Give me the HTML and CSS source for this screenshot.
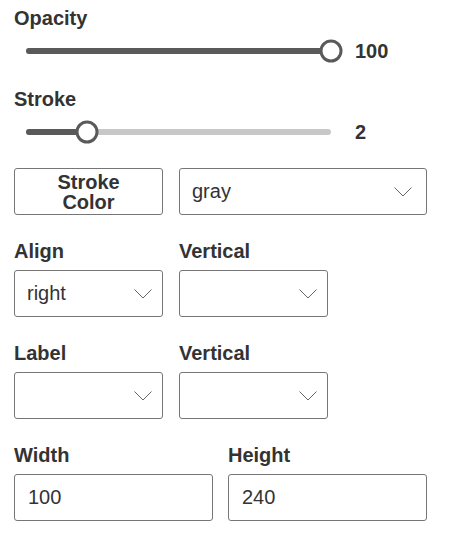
FILE: index.html
```html
<!DOCTYPE html>
<html>
<head>
<meta charset="utf-8">
<link rel="stylesheet" href="styles.css">
</head>
<body>
<div class="panel">
  <div class="group">
    <div class="label">Opacity</div>
    <div class="slider-row">
      <div class="track">
        <div class="fill" style="width:100%"></div>
        <div class="thumb" style="left:100%"></div>
      </div>
      <div class="value">100</div>
    </div>
  </div>

  <div class="group">
    <div class="label">Stroke</div>
    <div class="slider-row">
      <div class="track">
        <div class="fill" style="width:20%"></div>
        <div class="thumb" style="left:20%"></div>
      </div>
      <div class="value">2</div>
    </div>
  </div>

  <div class="color-row">
    <button class="btn">Stroke<br>Color</button>
    <div class="select select-wide">
      <span class="select-text">gray</span>
      <svg class="chev" width="18" height="10" viewBox="0 0 18 10"><polyline points="0.5,0.5 9,9 17.5,0.5" fill="none" stroke="#666" stroke-width="1"/></svg>
    </div>
  </div>

  <div class="pair-row">
    <div class="field">
      <div class="label">Align</div>
      <div class="select">
        <span class="select-text">right</span>
        <svg class="chev" width="18" height="10" viewBox="0 0 18 10"><polyline points="0.5,0.5 9,9 17.5,0.5" fill="none" stroke="#666" stroke-width="1"/></svg>
      </div>
    </div>
    <div class="field">
      <div class="label">Vertical</div>
      <div class="select">
        <span class="select-text"></span>
        <svg class="chev" width="18" height="10" viewBox="0 0 18 10"><polyline points="0.5,0.5 9,9 17.5,0.5" fill="none" stroke="#666" stroke-width="1"/></svg>
      </div>
    </div>
  </div>

  <div class="pair-row">
    <div class="field">
      <div class="label">Label</div>
      <div class="select">
        <span class="select-text"></span>
        <svg class="chev" width="18" height="10" viewBox="0 0 18 10"><polyline points="0.5,0.5 9,9 17.5,0.5" fill="none" stroke="#666" stroke-width="1"/></svg>
      </div>
    </div>
    <div class="field">
      <div class="label">Vertical</div>
      <div class="select">
        <span class="select-text"></span>
        <svg class="chev" width="18" height="10" viewBox="0 0 18 10"><polyline points="0.5,0.5 9,9 17.5,0.5" fill="none" stroke="#666" stroke-width="1"/></svg>
      </div>
    </div>
  </div>

  <div class="size-row">
    <div class="field">
      <div class="label">Width</div>
      <div class="input">100</div>
    </div>
    <div class="field">
      <div class="label">Height</div>
      <div class="input">240</div>
    </div>
  </div>
</div>
</body>
</html>
```

FILE: styles.css
```css
html, body {
  margin: 0;
  padding: 0;
  background: #fff;
}

body {
  font-family: "Liberation Sans", Arial, sans-serif;
  color: #333;
  font-size: 20px;
}

.panel {
  width: 413px;
  padding: 7px 0 0 14px;
}

.label {
  font-weight: bold;
  line-height: 23px;
  height: 23px;
  color: #333;
}

.group + .group {
  margin-top: 24px;
}

.slider-row {
  display: flex;
  align-items: center;
  height: 26px;
  margin-top: 8px;
  padding-left: 12px;
}

.track {
  position: relative;
  width: 305px;
  height: 6px;
  border-radius: 3px;
  background: #c8c8c8;
}

.fill {
  height: 100%;
  border-radius: 3px;
  background: #5a5a5a;
}

.thumb {
  position: absolute;
  top: 50%;
  width: 23px;
  height: 23px;
  box-sizing: border-box;
  border: 3px solid #5a5a5a;
  border-radius: 50%;
  background: #fff;
  transform: translate(-50%, -50%);
}

.value {
  margin-left: 24px;
  font-weight: bold;
  line-height: 23px;
}

.color-row {
  display: grid;
  grid-template-columns: 149px 1fr;
  column-gap: 16px;
  margin-top: 23px;
}

.btn {
  height: 47px;
  box-sizing: border-box;
  border: 1px solid #767676;
  border-radius: 3px;
  background: #fff;
  font-family: "Liberation Sans", Arial, sans-serif;
  font-size: 20px;
  font-weight: bold;
  line-height: 20px;
  color: #333;
  padding: 0;
  text-align: center;
}

.select {
  height: 47px;
  box-sizing: border-box;
  border: 1px solid #767676;
  border-radius: 3px;
  display: flex;
  align-items: center;
  justify-content: space-between;
  padding: 0 10px 0 12px;
}

.select-wide {
  padding-right: 14px;
}

.select-text {
  line-height: 23px;
  color: #333;
}

.chev {
  display: block;
  margin-top: 1px;
}

.pair-row {
  display: grid;
  grid-template-columns: 149px 149px;
  column-gap: 16px;
  margin-top: 25px;
}

.size-row {
  display: grid;
  grid-template-columns: 1fr 1fr;
  column-gap: 15px;
  margin-top: 25px;
}

.field .label {
  margin-bottom: 7px;
}

.input {
  height: 47px;
  box-sizing: border-box;
  border: 1px solid #767676;
  border-radius: 3px;
  padding: 0 13px;
  display: flex;
  align-items: center;
  line-height: 23px;
  color: #333;
}
```
